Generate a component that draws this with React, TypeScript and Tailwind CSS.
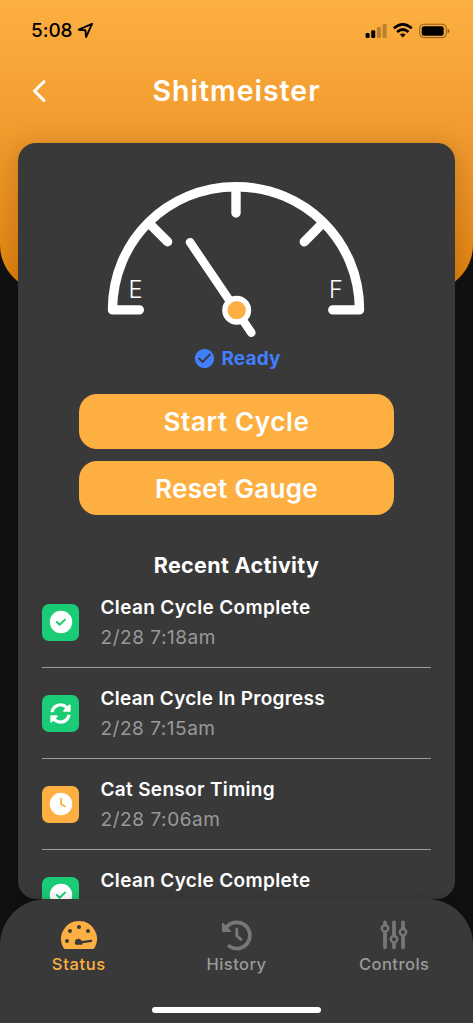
import React from "react";
import { MdCheckCircle } from "react-icons/md";

/* Text line whose tracking is adjusted so that it fills a known width. */
function Label({ children, w, size, weight, h, className = "", anchor = "start" }: {
  children: string; w: number; size: number; weight: number; h: number; className?: string; anchor?: string;
}) {
  const ref = React.useRef<HTMLSpanElement>(null);
  const [sp, setSp] = React.useState(0);
  React.useLayoutEffect(() => {
    if (!ref.current) return;
    const now = ref.current.getBoundingClientRect().width;
    setSp((w - now) / children.length);
  }, []);
  return (
    <div className={`flex shrink-0 whitespace-nowrap ${anchor === "middle" ? "justify-center" : "justify-start"} ${className}`} style={{ height: h, lineHeight: `${h}px`, fontSize: size, fontWeight: weight }}>
      <span ref={ref} style={{ letterSpacing: sp }}>{children}</span>
    </div>
  );
}

function Check() {
  return (
    <svg width="24" height="24" viewBox="0 0 24 24">
      <circle cx="12" cy="12" r="11.2" fill="#fff" />
      <path d="M7.9 12l2.7 2.8 5.4-5.2" fill="none" stroke="#19cc75" strokeWidth="2" strokeLinecap="round" strokeLinejoin="round" />
    </svg>
  );
}
function Sync() {
  return (
    <svg width="21" height="21" viewBox="0 0 512 512" fill="#fff">
      <path d="M370.72 133.28C339.458 104.008 298.888 87.962 255.848 88c-77.458.068-144.328 53.178-162.791 126.85-1.344 5.363-6.122 9.15-11.651 9.15H24.103c-7.498 0-13.194-6.807-11.807-14.176C33.933 94.924 134.813 8 256 8c66.448 0 126.791 26.136 171.315 68.685L463.03 40.97C478.149 25.851 504 36.559 504 57.941V192c0 13.255-10.745 24-24 24H345.941c-21.382 0-32.09-25.851-16.971-40.971l41.75-41.749zM32 296h134.059c21.382 0 32.09 25.851 16.971 40.971l-41.75 41.75c31.262 29.273 71.835 45.319 114.876 45.28 77.418-.07 144.315-53.144 162.787-126.849 1.344-5.363 6.122-9.15 11.651-9.15h57.304c7.498 0 13.194 6.807 11.807 14.176C478.067 417.076 377.187 504 256 504c-66.448 0-126.791-26.136-171.315-68.685L48.97 471.03C33.851 486.149 8 475.441 8 454.059V320c0-13.255 10.745-24 24-24z" />
    </svg>
  );
}
function Clock() {
  return (
    <svg width="24" height="24" viewBox="0 0 24 24">
      <circle cx="12" cy="12" r="11.2" fill="#fff" />
      <path d="M12.2 5.8v6.4l4.2 2.5" fill="none" stroke="#fdaf42" strokeWidth="1.8" strokeLinejoin="round" />
    </svg>
  );
}

function Gauge() {
  return (
    <svg width="270" height="170" viewBox="101.7 175 270 170" className="block">
      <g fill="none" stroke="#fff" strokeWidth="9.4" strokeLinecap="round" strokeLinejoin="round">
        <path d="M139 309.9H112.2C112.2 241 167 186.7 235.7 186.7S359.2 241 359.2 309.9H332.5" />
        <path d="M235.7 189V213M149.5 224L167.3 241.8M321.5 224L304 241.8" />
      </g>
      <path d="M189.7 242.2L251 332.7" stroke="#fff" strokeWidth="8.6" strokeLinecap="round" />
      <circle cx="236.4" cy="310.2" r="11.8" fill="#fdaf42" stroke="#fff" strokeWidth="5.4" />
      <text x="128.2" y="298" fill="#fff" fontSize="23.5" fontWeight="300" fontFamily="Inter">E</text>
      <text x="328.6" y="298" fill="#fff" fontSize="23.5" fontWeight="300" fontFamily="Inter">F</text>
    </svg>
  );
}

const rows = [
  { t: "Clean Cycle Complete", w: 210, d: "2/28 7:18am", dw: 115.5, c: "bg-[#19cc75]", i: <Check /> },
  { t: "Clean Cycle In Progress", w: 224.5, d: "2/28 7:15am", dw: 115, c: "bg-[#19cc75]", i: <Sync /> },
  { t: "Cat Sensor Timing", w: 174.5, d: "2/28 7:06am", dw: 120, c: "bg-[#fdaf42]", i: <Clock /> },
  { t: "Clean Cycle Complete", w: 210, d: "", dw: 0, c: "bg-[#19cc75]", i: <Check /> },
];

function StatusBar() {
  return (
    <div className="flex h-[60px] items-center pl-[31px] pr-[23px] pt-px text-black">
      <Label w={41.5} size={19} weight={500} h={24}>5:08</Label>
      <svg width="17" height="17" viewBox="0 0 17 17" className="ml-[4.5px]">
        <path d="M1.8 7.7L15 1.8 9.1 15 8.4 8.3Z" fill="none" stroke="#000" strokeWidth="1.9" strokeLinejoin="round" />
      </svg>
      <svg width="86" height="18" viewBox="0 0 86 18" className="ml-auto">
        <rect x="1.6" y="11" width="4" height="5" rx="1.2" />
        <rect x="7.2" y="8.2" width="4" height="7.8" rx="1.2" />
        <rect x="12.9" y="5" width="4" height="11" rx="1.2" opacity=".25" />
        <rect x="18.6" y="2" width="4" height="14" rx="1.2" opacity=".25" />
        <g fill="none" stroke="#000" strokeWidth="2.7">
          <path d="M29.8 6.3Q38.8-1.5 47.8 6.3" />
          <path d="M33.1 10Q38.8 5 44.5 10" />
        </g>
        <path d="M36.3 12.6Q38.8 10.7 41.3 12.6L38.8 15.2Z" stroke="#000" strokeWidth=".6" strokeLinejoin="round" />
        <rect x="55.7" y="2.2" width="26.6" height="13.4" rx="4" fill="none" stroke="#000" strokeOpacity=".45" />
        <rect x="57.7" y="4.2" width="22" height="9.6" rx="2.3" />
        <path d="M83.7 6.7v4.6q1.7-.8 1.7-2.3t-1.7-2.3" opacity=".5" />
      </svg>
    </div>
  );
}

export default function App() {
  return (
    <main className="relative isolate flex h-[1023px] w-[473px] flex-col overflow-hidden bg-[#111] font-['Inter','Noto_Sans',sans-serif]">
      <div className="absolute inset-x-0 top-0 -z-10 h-[291px] rounded-b-[46px] bg-linear-to-b from-[#fdb042] to-[#e28109]" />
      <StatusBar />
      <header className="flex h-[83px] shrink-0 items-start">
        <svg width="62" height="62" viewBox="0 0 62 62" className="block">
          <path d="M43.9 21.7L34.5 31l9.4 9.4" fill="none" stroke="#fff" strokeWidth="3" strokeLinecap="round" strokeLinejoin="round" />
        </svg>
        <Label className="w-[349px] text-white" anchor="middle" w={168} size={28.5} weight={600} h={62}>Shitmeister</Label>
      </header>
      <section className="mx-[18px] flex h-[756px] shrink-0 flex-col overflow-hidden rounded-[18px] bg-[#393939] text-white shadow-[0_4px_24px_2px_rgba(0,0,0,0.16)]">
        <div className="flex h-[202px] shrink-0 justify-center pt-[32px]"><Gauge /></div>
        <div className="flex h-[26px] shrink-0 items-center pl-[175px] text-[#417fff]">
          <MdCheckCircle size={23} />
          <Label className="ml-[5.5px] pt-px" w={59} size={19} weight={700} h={26}>Ready</Label>
        </div>
        <div className="mt-[23px] flex flex-col items-center gap-[12px]">
          <button className="h-[54.5px] w-[315px] rounded-[18px] bg-[#fdaf42]"><Label anchor="middle" w={146} size={26} weight={600} h={55}>Start Cycle</Label></button>
          <button className="h-[54.5px] w-[315px] rounded-[18px] bg-[#fdaf42]"><Label anchor="middle" w={163} size={26} weight={600} h={55}>Reset Gauge</Label></button>
        </div>
        <Label className="mt-[35px]" anchor="middle" w={165.5} size={21.5} weight={700} h={30}>Recent Activity</Label>
        <div className="mx-6 mt-[-3px] flex shrink-0 flex-col">
          {rows.map((r, i) => (
            <article key={i} className="flex h-[91px] shrink-0 border-b border-[#9b9b9b] pt-[17px]">
              <div className={`mt-[9.5px] flex size-[37px] shrink-0 items-center justify-center rounded-[7px] ${r.c}`}>{r.i}</div>
              <div className="ml-[21.5px]">
                <Label w={r.w} size={19} weight={600} h={28}>{r.t}</Label>
                {r.d && <Label className="mt-px text-[#999]" w={r.dw} size={19} weight={400} h={30}>{r.d}</Label>}
              </div>
            </article>
          ))}
        </div>
      </section>
      <footer className="flex h-[124px] shrink-0 flex-col rounded-t-[46px] bg-[#393939] text-[#999] shadow-[0_0_14px_rgba(0,0,0,0.15)]">
        <nav className="grid grid-cols-3 pt-[20px]">
          <div className="flex flex-col items-center text-[#fdaf42]">
            <svg width="36" height="32" viewBox="0 0 36 32">
              <path d="M18 2A17.9 17.9 0 0 0 2.5 28.9Q3.2 30 4.4 30h27.2q1.2 0 1.9-1.1A17.9 17.9 0 0 0 18 2Z" fill="currentColor" />
              <g fill="#393939">
                <circle cx="18" cy="8" r="2" /><circle cx="9" cy="12" r="2" /><circle cx="27" cy="12" r="2" /><circle cx="6" cy="22" r="2" />
                <path d="M14.5 25.7A3.7 3.7 0 1 1 20.8 21.9L30.2 20.8A1.2 1.2 0 0 1 30.5 23.1L21.5 24.3L21.1 25.7Z" />
              </g>
            </svg>
            <Label className="mt-px" w={54} size={16.5} weight={500} h={25}>Status</Label>
          </div>
          <div className="flex flex-col items-center">
            <svg width="32" height="32" viewBox="0 0 32 32" fill="none" stroke="#777" strokeLinecap="round" strokeLinejoin="round">
              <path d="M5.6 9.6A13.1 13.1 0 1 1 9.4 27.3" strokeWidth="3.8" />
              <path d="M2.8 4.6V12.3H10.4Z" fill="#777" strokeWidth="1.6" />
              <path d="M16.8 9.9V16.9L21 20.4" strokeWidth="2.9" />
            </svg>
            <Label className="mt-px" w={60} size={16.5} weight={500} h={25}>History</Label>
          </div>
          <div className="flex flex-col items-center">
            <svg width="28" height="32" viewBox="0 0 28 32" fill="none" stroke="#777" strokeLinecap="round">
              <path d="M5 3.3v2.2M5 14v14.3M14 3.3v13.2M14 25v3.3M23 3.3v5.8M23 17.5v10.8" strokeWidth="3.8" />
              <g strokeWidth="2.5">
                <circle cx="5" cy="9.4" r="3.2" /><circle cx="14" cy="20.2" r="3.2" /><circle cx="23" cy="13.1" r="3.2" />
              </g>
            </svg>
            <Label className="mt-px" w={70.5} size={16.5} weight={500} h={25}>Controls</Label>
          </div>
        </nav>
        <div className="mx-auto mt-[30px] h-[6px] w-[169px] shrink-0 rounded-full bg-white" />
      </footer>
    </main>
  );
}
